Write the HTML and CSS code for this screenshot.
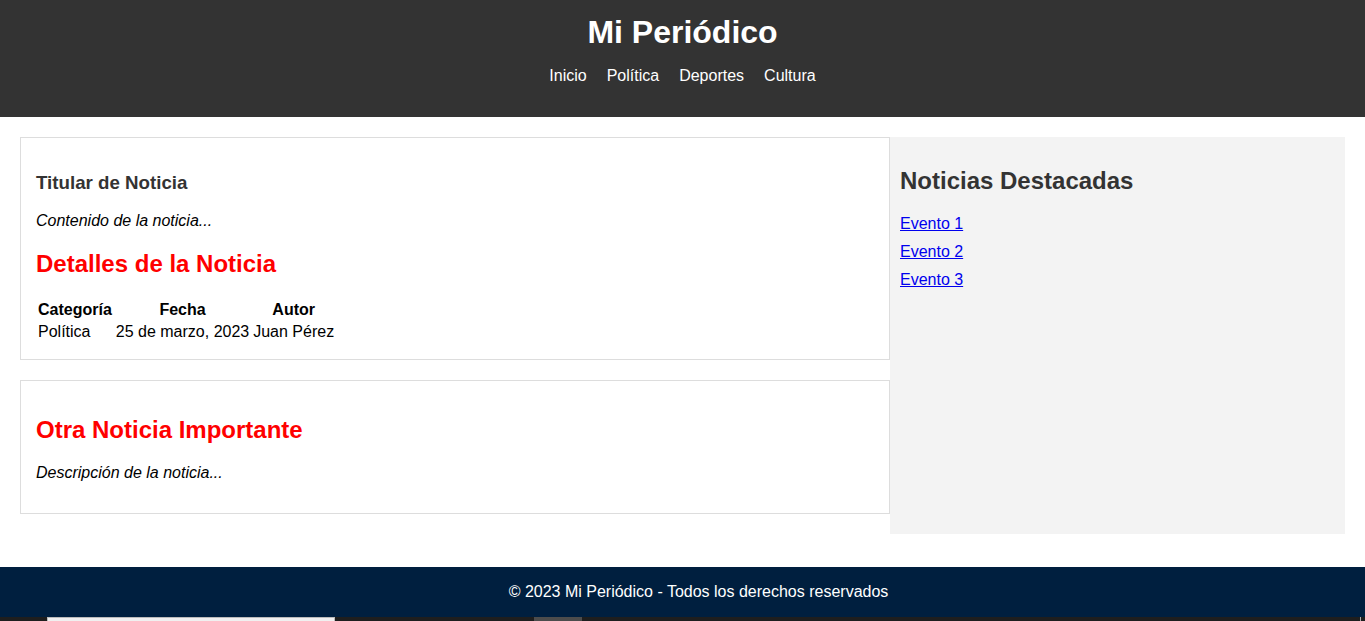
FILE: index.html
```html
<!DOCTYPE html>
<html lang="es">
<head>
<meta charset="utf-8">
<title>Mi Periódico</title>
<link rel="stylesheet" href="styles.css">
</head>
<body>
<header class="site-header">
  <h1 class="site-title">Mi Periódico</h1>
  <nav>
    <ul class="nav-list">
      <li><a class="nav-link" href="#">Inicio</a></li>
      <li><a class="nav-link" href="#">Política</a></li>
      <li><a class="nav-link" href="#">Deportes</a></li>
      <li><a class="nav-link" href="#">Cultura</a></li>
    </ul>
  </nav>
</header>
<main class="layout">
  <section class="news">
    <article class="card">
      <h3 class="headline">Titular de Noticia</h3>
      <p class="summary">Contenido de la noticia...</p>
      <h2 class="red-title">Detalles de la Noticia</h2>
      <table class="details">
        <tr><th>Categoría</th><th>Fecha</th><th>Autor</th></tr>
        <tr><td>Política</td><td>25 de marzo, 2023</td><td>Juan Pérez</td></tr>
      </table>
    </article>
    <article class="card">
      <h2 class="red-title">Otra Noticia Importante</h2>
      <p class="summary">Descripción de la noticia...</p>
    </article>
  </section>
  <aside class="sidebar">
    <h2 class="side-title">Noticias Destacadas</h2>
    <ul class="side-list">
      <li><a href="#">Evento 1</a></li>
      <li><a href="#">Evento 2</a></li>
      <li><a href="#">Evento 3</a></li>
    </ul>
  </aside>
</main>
<footer class="site-footer">
  <p class="footer-text">© 2023 Mi Periódico - Todos los derechos reservados</p>
</footer>
<div class="taskbar">
  <div class="task-search"></div>
  <div class="task-app"></div>
  <div class="task-edge"></div>
</div>
</body>
</html>
```

FILE: styles.css
```css
html, body {
  margin: 0;
  padding: 0;
}
body {
  font-family: "Liberation Sans", Arial, sans-serif;
  font-size: 16px;
  background: #fff;
  color: #000;
}
.site-header {
  background: #333;
  color: #fff;
  text-align: center;
  padding: 14px 0 32px;
}
.site-title {
  margin: 0 0 16px;
  font-size: 32px;
  font-weight: bold;
}
.nav-list {
  list-style: none;
  margin: 0;
  padding: 0;
  display: flex;
  justify-content: center;
}
.nav-list li {
  margin: 0 10px;
}
.nav-link {
  color: #fff;
  text-decoration: none;
}
.layout {
  display: grid;
  grid-template-columns: 1fr 455px;
  padding: 20px;
}
.card {
  border: 1px solid #ddd;
  padding: 15px;
  margin-bottom: 20px;
}
.headline {
  font-size: 18.72px;
  color: #333;
  margin: 18.72px 0;
}
.summary {
  font-style: italic;
  margin: 16px 0;
}
.red-title {
  color: #ff0000;
  font-size: 24px;
  margin: 19.92px 0;
}
.details {
  margin-left: -1px;
}
.details th {
  font-weight: bold;
}
.sidebar {
  background: #f3f3f3;
  padding: 10px;
}
.side-title {
  font-size: 24px;
  color: #333;
  margin: 19.92px 0;
}
.side-list {
  list-style: none;
  margin: 0;
  padding: 0;
}
.side-list li {
  margin-bottom: 10px;
}
.side-list a {
  color: #0000ee;
}
.site-footer {
  margin-top: 13px;
  background: #001f3f;
  color: #fff;
  text-align: center;
  padding: 16px 0 16px 32px;
}
.footer-text {
  margin: 0;
}
.taskbar {
  height: 4px;
  background: #1e1e1e;
  display: flex;
  overflow: hidden;
}
.task-search {
  margin-left: 47px;
  width: 286px;
  background: #f0f0f0;
  border-top: 1px solid #bbb;
  border-left: 1px solid #bbb;
  border-right: 1px solid #bbb;
}
.task-app {
  margin-left: 199px;
  width: 48px;
  background: #4c4c4c;
}
.task-edge {
  margin-left: auto;
  margin-right: 4px;
  width: 1px;
  background: #aaa;
}
```
